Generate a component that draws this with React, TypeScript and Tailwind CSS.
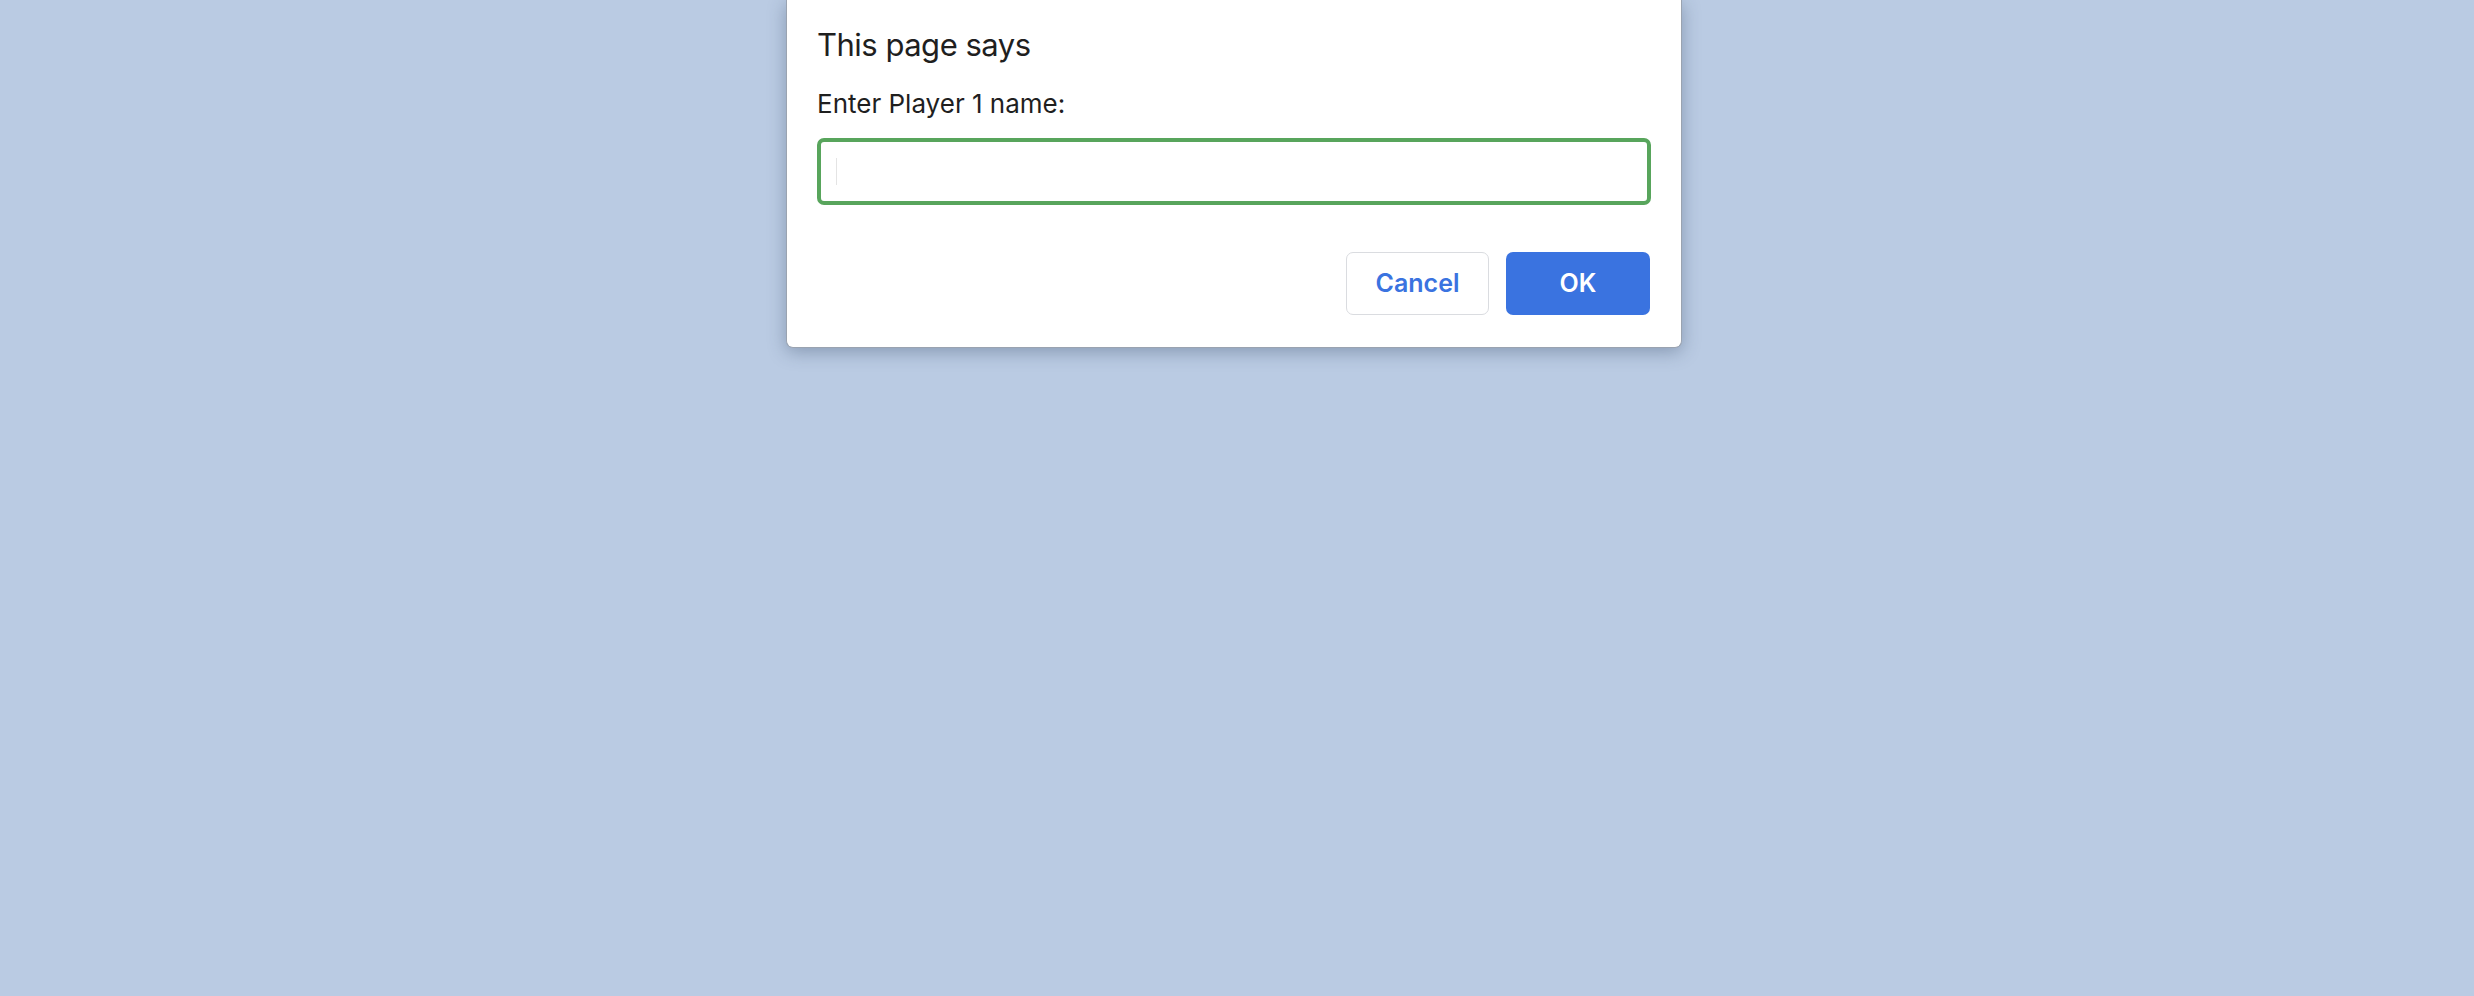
export default function App() {
  return (
    <div className="min-h-[996px] w-full bg-[#bacbe3] font-['Inter',sans-serif] flex justify-center">
      <div className="mr-[6px] w-[896px] h-[348px] bg-white rounded-b-[7px] border border-t-0 border-[#9aa3b0] shadow-[0_4px_18px_rgba(40,60,90,0.35)] px-[30px] pt-[26px] flex flex-col">
        <h1 className="text-[31px] leading-[38px] tracking-[-0.5px] text-[#1f1f1f] font-normal">This page says</h1>
        <p className="mt-[24px] text-[26px] leading-[32px] text-[#1f1f1f]">Enter Player 1 name:</p>
        <div className="mt-[18px] h-[67px] rounded-[7px] border-[4px] border-[#58a55c] flex items-center pl-[15px]">
          <span className="w-[1px] h-[27px] bg-[#e4e4e4]" />
        </div>
        <div className="mt-[47px] flex justify-end gap-[17px] pr-[1px]">
          <button className="w-[143px] h-[63px] rounded-[7px] border-[1.5px] border-[#dadce0] bg-white text-[#3a73e0] text-[25px] font-semibold">
            Cancel
          </button>
          <button className="w-[144px] h-[63px] rounded-[7px] bg-[#3a73e0] text-white text-[25px] font-semibold">
            OK
          </button>
        </div>
      </div>
    </div>
  )
}
